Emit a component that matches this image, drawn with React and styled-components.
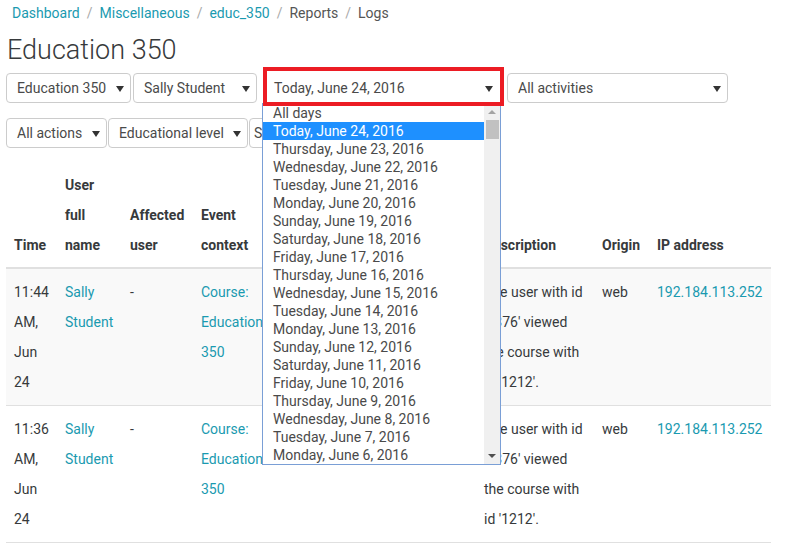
import React from 'react';
import styled, { createGlobalStyle } from 'styled-components';

const GlobalStyle = createGlobalStyle`
  body {
    margin: 0;
    background: #fff;
    font-family: Roboto, 'Liberation Sans', Arial, sans-serif;
    color: #373a3c;
    font-size: 14px;
  }
`;

const Page = styled.div`
  padding: 0 6px;
  width: 779px;
`;

const Breadcrumb = styled.nav`
  display: flex;
  align-items: center;
  height: 20px;
  padding: 3px 0 0 6px;
  line-height: 20px;
`;

const Crumb = styled.span`
  color: ${p => (p.$link ? '#1a9ab0' : '#555')};
`;

const Sep = styled.span`
  color: #aaa;
  padding: 0 7px;
`;

const Title = styled.h1`
  margin: 9px 0 0 1px;
  font-size: 27px;
  font-weight: 300;
  line-height: 36px;
  color: #373a3c;
`;

const FilterRow = styled.div`
  display: flex;
  align-items: flex-end;
  gap: ${p => p.$gap}px;
  margin-top: ${p => p.$top}px;
`;

const Select = styled.div`
  position: relative;
  box-sizing: border-box;
  width: ${p => p.$w}px;
  height: 30px;
  padding: 0 20px 0 ${p => p.$pad ?? 10}px;
  border: 1px solid ${p => (p.$bare ? 'transparent' : '#ccc')};
  border-radius: 4px;
  background: #fff;
  line-height: 28px;
  white-space: nowrap;
  overflow: hidden;
  color: #4a4a4a;
  &::after {
    content: '';
    position: absolute;
    right: 6px;
    top: 12px;
    border-left: 4px solid transparent;
    border-right: 4px solid transparent;
    border-top: 6px solid #333;
  }
`;

const Highlight = styled.div`
  position: relative;
  box-sizing: border-box;
  width: 241px;
  height: 39px;
  padding: 6px 4px 0;
  margin: 0 1px 0 4px;
  &::before {
    content: '';
    position: absolute;
    inset: 0;
    border: 4px solid #ec1c24;
    z-index: 3;
    pointer-events: none;
  }
`;

const ListBox = styled.div`
  position: absolute;
  left: -1px;
  top: 36px;
  z-index: 2;
  box-sizing: border-box;
  width: 239px;
  height: 362px;
  border: 1px solid #7a9fd6;
  background: #fff;
  display: flex;
`;

const Options = styled.div`
  flex: 1;
  overflow: hidden;
`;

const Option = styled.div`
  height: 18px;
  line-height: 18px;
  padding-left: 10px;
  white-space: nowrap;
  color: ${p => (p.$active ? '#fff' : '#4a4a4a')};
  background: ${p => (p.$active ? '#1e90ff' : 'transparent')};
`;

const Scrollbar = styled.div`
  width: 16px;
  background: #f0f0f0;
  display: flex;
  flex-direction: column;
  align-items: center;
`;

const Arrow = styled.div`
  width: 0;
  height: 0;
  margin: 6px 0;
  border-left: 4px solid transparent;
  border-right: 4px solid transparent;
  ${p =>
    p.$up
      ? 'border-bottom: 4px solid #a3a3a3;'
      : 'border-top: 4px solid #505050; margin-top: auto;'}
`;

const Thumb = styled.div`
  width: 13px;
  height: 19px;
  background: #c1c1c1;
`;

const Table = styled.table`
  margin-top: 14px;
  width: 765px;
  border-collapse: collapse;
  table-layout: fixed;
  line-height: 30px;
`;

const Th = styled.th`
  text-align: left;
  vertical-align: bottom;
  font-weight: 700;
  padding: 8px 8px 7px 8px;
  border-bottom: 2px solid #e0e0e0;
  color: #373a3c;
`;

const Row = styled.tr`
  background: ${p => (p.$striped ? '#f9f9f9' : '#fff')};
  border-bottom: 1px solid #e0e0e0;
`;

const Td = styled.td`
  vertical-align: top;
  padding: 8px 8px 8px 8px;
  color: ${p => (p.$link ? '#1a9ab0' : '#373a3c')};
  overflow: hidden;
`;

const columns = [
  ['Time', 51],
  ['User full name', 65],
  ['Affected user', 71],
  ['Event context', 72],
  ['Component', 100],
  ['Event name', 111],
  ['Description', 118],
  ['Origin', 55],
  ['IP address', 122],
];

const days = [
  'Today, June 24, 2016',
  'Thursday, June 23, 2016',
  'Wednesday, June 22, 2016',
  'Tuesday, June 21, 2016',
  'Monday, June 20, 2016',
  'Sunday, June 19, 2016',
  'Saturday, June 18, 2016',
  'Friday, June 17, 2016',
  'Thursday, June 16, 2016',
  'Wednesday, June 15, 2016',
  'Tuesday, June 14, 2016',
  'Monday, June 13, 2016',
  'Sunday, June 12, 2016',
  'Saturday, June 11, 2016',
  'Friday, June 10, 2016',
  'Thursday, June 9, 2016',
  'Wednesday, June 8, 2016',
  'Tuesday, June 7, 2016',
  'Monday, June 6, 2016',
];

const logs = [
  { time: '11:44 AM, Jun 24' },
  { time: '11:36 AM, Jun 24' },
];

export default function App() {
  return (
    <Page>
      <GlobalStyle />
      <Breadcrumb>
        <Crumb $link>Dashboard</Crumb>
        <Sep>/</Sep>
        <Crumb $link>Miscellaneous</Crumb>
        <Sep>/</Sep>
        <Crumb $link>educ_350</Crumb>
        <Sep>/</Sep>
        <Crumb>Reports</Crumb>
        <Sep>/</Sep>
        <Crumb>Logs</Crumb>
      </Breadcrumb>
      <Title>Education 350</Title>

      <FilterRow $gap={2} $top={-1}>
        <Select $w={125} style={{ marginBottom: 3 }}>Education 350</Select>
        <Select $w={124} style={{ marginBottom: 3 }}>Sally Student</Select>
        <Highlight>
          <Select $w={233} $pad={6} $bare>Today, June 24, 2016</Select>
          <ListBox>
            <Options>
              <Option>All days</Option>
              {days.map((d, i) => (
                <Option key={d} $active={i === 0}>
                  {d}
                </Option>
              ))}
            </Options>
            <Scrollbar>
              <Arrow $up />
              <Thumb />
              <Arrow />
            </Scrollbar>
          </ListBox>
        </Highlight>
        <Select $w={221} style={{ marginBottom: 3 }}>All activities</Select>
      </FilterRow>

      <FilterRow $gap={1} $top={12}>
        <Select $w={101}>All actions</Select>
        <Select $w={140}>Educational level</Select>
        <Select $w={110} $pad={4}>Standard log</Select>
      </FilterRow>

      <Table>
        <colgroup>
          {columns.map(([name, w]) => (
            <col key={name} style={{ width: w }} />
          ))}
        </colgroup>
        <thead>
          <tr>
            {columns.map(([name]) => (
              <Th key={name}>{name}</Th>
            ))}
          </tr>
        </thead>
        <tbody>
          {logs.map((log, i) => (
            <Row key={log.time} $striped={i === 0}>
              <Td>{log.time}</Td>
              <Td $link>Sally Student</Td>
              <Td>-</Td>
              <Td $link>Course: Education 350</Td>
              <Td>System</Td>
              <Td $link>Course viewed</Td>
              <Td>The user with id '1376' viewed the course with id '1212'.</Td>
              <Td>web</Td>
              <Td $link>192.184.113.252</Td>
            </Row>
          ))}
        </tbody>
      </Table>
    </Page>
  );
}
